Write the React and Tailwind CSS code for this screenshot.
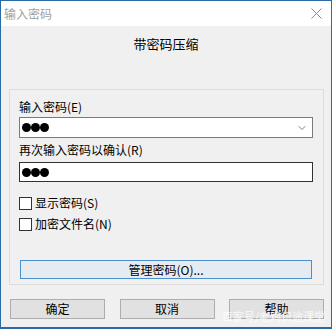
import { ChevronDown } from "lucide-react";

const font = { fontFamily: '"Noto Sans CJK SC", "Liberation Sans", sans-serif' };

function Dots() {
  return (
    <div className="flex items-center gap-[0px] pl-[2px]">
      <span className="h-[9px] w-[9px] rounded-full bg-black" />
      <span className="h-[9px] w-[9px] rounded-full bg-black" />
      <span className="h-[9px] w-[9px] rounded-full bg-black" />
    </div>
  );
}

function Check({ label }) {
  return (
    <label className="flex h-[20px] items-center gap-[3px] text-[12px] text-black">
      <span className="h-[13px] w-[13px] border border-[#333] bg-white" />
      {label}
    </label>
  );
}

function DlgButton({ children }) {
  return (
    <button className="flex h-[20px] w-[95px] items-center justify-center border border-[#adadad] bg-[#e1e1e1] text-[12px] text-black">
      {children}
    </button>
  );
}

export default function App() {
  return (
    <div className="relative flex h-[329px] w-[332px] flex-col overflow-hidden border-x-[1px] border-t-[1px] border-b-[2px] border-[#2a6aa8] bg-[#f0f0f0]" style={font}>
      <div className="flex h-[25px] items-center justify-between bg-white pl-[3px] pr-[9px]">
        <span className="text-[12px] text-[#a0a0a0]">输入密码</span>
        <svg width="11" height="11" viewBox="0 0 11 11" className="stroke-[#8a8a8a]">
          <path d="M0.5 0.5 L10.5 10.5 M10.5 0.5 L0.5 10.5" strokeWidth="1" />
        </svg>
      </div>

      <div className="pt-[9px] text-center text-[13px] leading-[18px] text-black">带密码压缩</div>

      <div className="ml-[8px] mt-[36px] flex h-[196px] w-[315px] flex-col border border-[#dcdcdc] px-[9px] pt-[9px]">
        <div className="text-[12px] leading-[16px] text-black">输入密码(E)</div>
        <div className="mt-[2px] flex h-[21px] w-[294px] items-center justify-between border border-[#7a7a7a] bg-white pr-[4px]">
          <Dots />
          <ChevronDown size={12} strokeWidth={1.5} className="text-[#555]" />
        </div>
        <div className="mt-[4px] text-[12px] leading-[16px] text-black">再次输入密码以确认(R)</div>
        <div className="mt-[4px] flex h-[20px] w-[294px] items-center border border-[#333] bg-white">
          <Dots />
        </div>
        <div className="mt-[11px] flex flex-col gap-[1px]">
          <Check label="显示密码(S)" />
          <Check label="加密文件名(N)" />
        </div>
        <button className="ml-[1px] mt-[26px] flex h-[19px] w-[292px] items-center justify-center border border-[#4d8fcc] bg-[#e5ebf3] text-[12px] text-black">
          管理密码(O)...
        </button>
      </div>

      <div className="mt-[14px] flex justify-between pl-[9px] pr-[7px]">
        <DlgButton>确定</DlgButton>
        <DlgButton>取消</DlgButton>
        <DlgButton>帮助</DlgButton>
      </div>

      <div className="pointer-events-none absolute bottom-[3px] right-[6px] text-[11px] text-white/80">百家号/老鸡识途课堂</div>
    </div>
  );
}
